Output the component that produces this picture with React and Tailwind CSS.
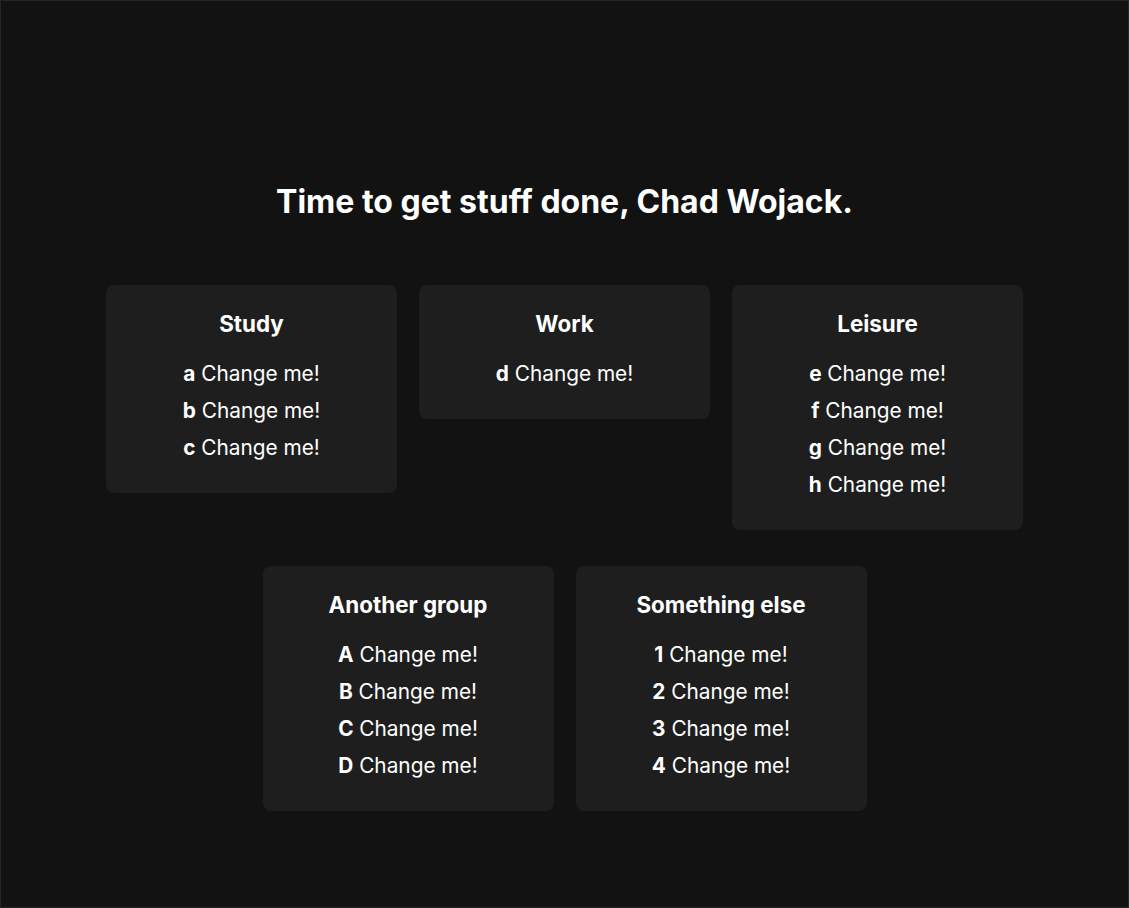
import React from "react";

const groups = [
  { title: "Study", keys: ["a", "b", "c"] },
  { title: "Work", keys: ["d"] },
  { title: "Leisure", keys: ["e", "f", "g", "h"] },
  { title: "Another group", keys: ["A", "B", "C", "D"] },
  { title: "Something else", keys: ["1", "2", "3", "4"] },
];

function GroupCard({ title, keys }) {
  return (
    <div className="w-[291px] rounded-lg bg-[#1e1e1e] px-6 pt-[23px] pb-[22px] text-center">
      <h2 className="mb-5 text-[22.4px] leading-8 font-bold text-white">{title}</h2>
      <ul>
        {keys.map((k) => (
          <li key={k} className="mb-[9px] text-[20.8px] leading-7 text-white">
            <b className="font-bold">{k}</b> Change me!
          </li>
        ))}
      </ul>
    </div>
  );
}

export default function App() {
  return (
    <div
      className="min-h-screen border border-[#262626] bg-[#121212] pt-[181px]"
      style={{ fontFamily: "Inter, 'Noto Sans', sans-serif" }}
    >
      <h1 className="mb-[63px] text-center text-[32px] leading-10 font-bold text-white">
        Time to get stuff done, Chad Wojack.
      </h1>
      <div className="mx-auto flex max-w-[917px] flex-wrap items-start justify-center gap-x-[22px] gap-y-[36px]">
        {groups.map((g) => (
          <GroupCard key={g.title} title={g.title} keys={g.keys} />
        ))}
      </div>
    </div>
  );
}
